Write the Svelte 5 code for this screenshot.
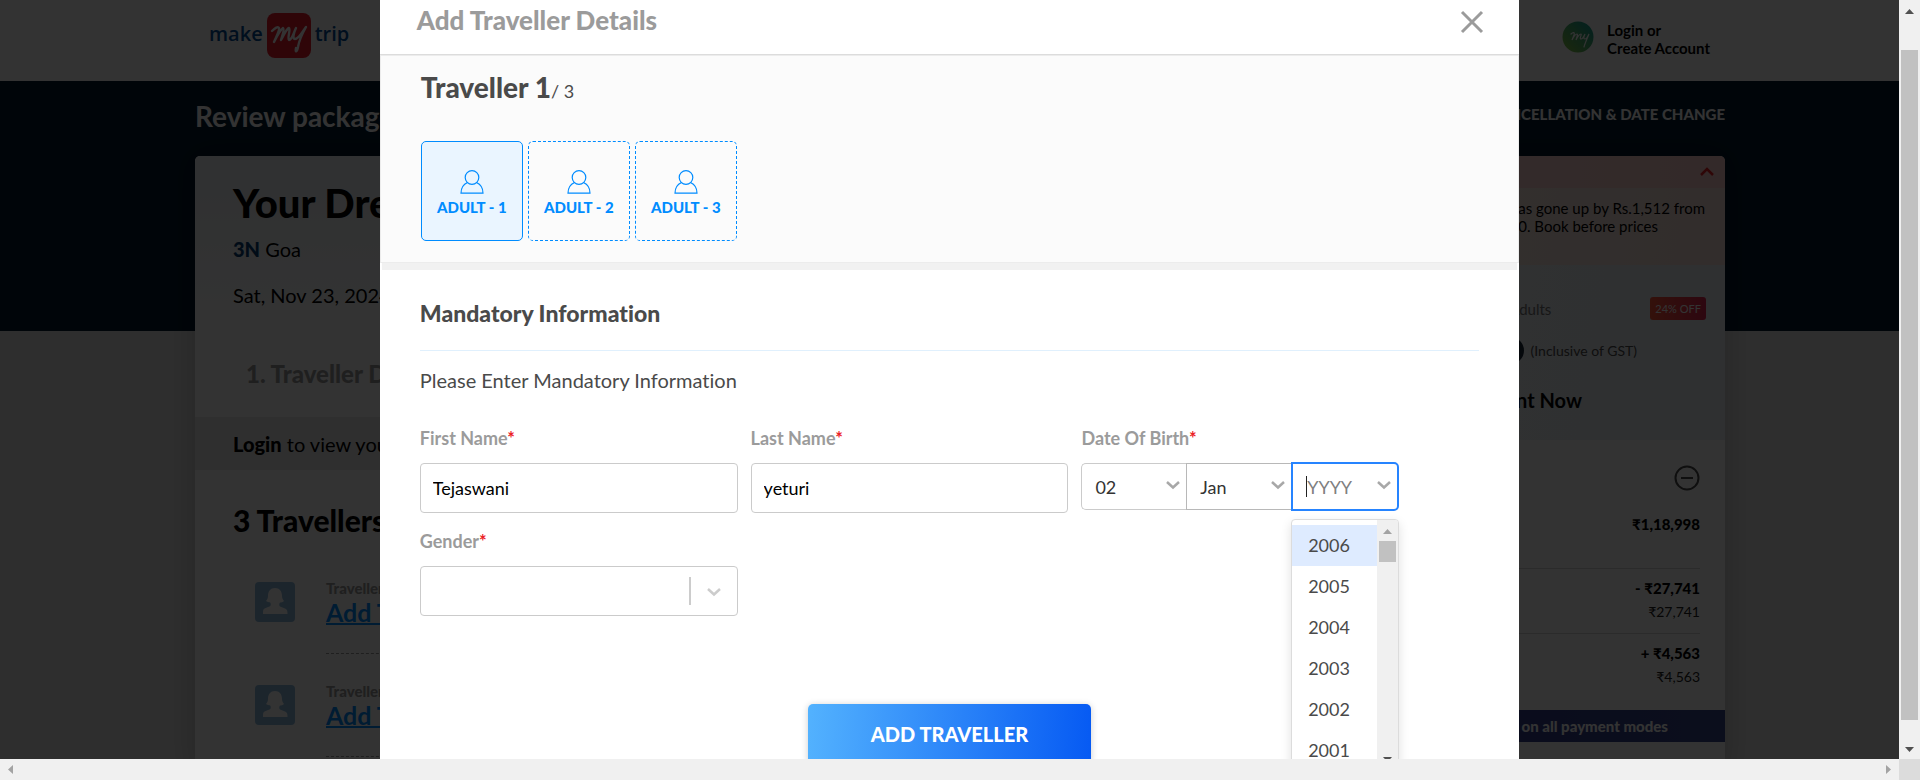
<script>
  const adults = ['ADULT - 1', 'ADULT - 2', 'ADULT - 3'];
  const years = [2006, 2005, 2004, 2003, 2002, 2001];
  let selected = $state(0);
  let firstName = $state('Tejaswani');
  let lastName = $state('yeturi');
</script>

{#snippet chevron()}
  <svg class="chev" viewBox="0 0 16 10" aria-hidden="true"><path d="M2 2l6 5.5L14 2" /></svg>
{/snippet}

<div class="window">
  <div class="viewport">
    <div class="page">
      <header class="top">
        <div class="wrap topbar">
          <a class="logo" href="#home" aria-label="make my trip">
            <span>make</span>
            <svg viewBox="0 0 44 45" aria-hidden="true">
              <rect width="44" height="45" rx="8" fill="#ea1b2c" />
              <g fill="none" stroke="#fff" stroke-width="2.4" stroke-linecap="round" stroke-linejoin="round">
                <path d="M5 18c3-3 6-5 7-3s-3 9-5 14c3-6 6-12 9-14 2 1-1 8-2 12 3-5 5-11 8-12 2 1-2 10 0 12 3 0 5-8 7-12-2 4-4 11-1 11 4 0 7-7 11-12-4 7-7 14-8 20-1 5-3 6-2 1" />
              </g>
            </svg>
            <span>trip</span>
          </a>
          <a class="login" href="#login">
            <svg viewBox="0 0 32 32" aria-hidden="true">
              <defs>
                <linearGradient id="my-grad" x1="0" y1="1" x2="1" y2="0">
                  <stop offset="0" stop-color="#8cc63f" /><stop offset="1" stop-color="#0a9b9b" />
                </linearGradient>
              </defs>
              <circle cx="16" cy="16" r="15.5" fill="url(#my-grad)" />
              <path d="M9 13c2-2 4-2 3 1l-2 5c2-4 4-6 5-6s0 3-1 6c2-4 4-6 5-6s-2 5 0 5 3-3 4-5c-1 2-2 5 0 5s3-3 4-5c-2 5-4 9-5 13" fill="none" stroke="#fff" stroke-width="1.2" stroke-linecap="round" />
            </svg>
            <span>Login or<br />Create Account</span>
          </a>
        </div>
      </header>
      <div class="hero">
        <div class="wrap herobar">
          <h1>Review package</h1>
          <span class="policy">CANCELLATION &amp; DATE CHANGE</span>
        </div>
      </div>
      <main class="wrap columns">
        <section class="card trip">
          <div class="summary">
            <h2>Your Dream</h2>
            <p class="nights"><b>3N</b> Goa</p>
            <p>Sat, Nov 23, 2024</p>
          </div>
          <h3 class="step">1. Traveller Details</h3>
          <p class="loginbar"><b>Login</b>&nbsp;to view your</p>
          <h3 class="count">3 Travellers</h3>
          <ul class="people">
            {#each [1, 2] as n}
              <li>
                <svg viewBox="0 0 40 40" aria-hidden="true">
                  <rect width="40" height="40" rx="4" fill="#8cb9dc" />
                  <path d="M20 6c4.500 0 7 3 7 8 0 2 1 4 2 5-1 1-3 1.500-4 1.500-1 1.500-1 3 0 4l5 2c2 .8 2.500 2 2.500 5.500H8C8 28.500 8 27 10 26.300l5-2c1-1 1-2.500 0-4-1 0-3-.3-4-1.300 1-1 2-3 2-5 0-5 2.500-8 7-8z" fill="#fff" />
                </svg>
                <div>
                  <small>Traveller {n}</small>
                  <a href="#traveller">Add Traveller</a>
                </div>
              </li>
            {/each}
          </ul>
        </section>

        <aside class="card fare">
          <div class="alert">
            <svg viewBox="0 0 16 10" aria-hidden="true"><path d="M2 8l6-6 6 6" /></svg>
          </div>
          <p class="change"><span>has gone up by Rs.1,512 from</span><span class="second">0. Book before prices</span></p>
          <div class="offer">
            <div class="row adults"><span>Adults</span><b class="badge">24% OFF</b></div>
            <div class="row gst"><i></i><span>(Inclusive of GST)</span></div>
            <p class="paynow">Payment Now</p>
          </div>
          <div class="bill">
            <svg class="minus" viewBox="0 0 26 26" aria-hidden="true"><circle cx="13" cy="13" r="11.500" /><path d="M7 13h12" /></svg>
            <p class="total"><b>₹1,18,998</b></p>
            <p class="line"><b>- ₹27,741</b><span>₹27,741</span></p>
            <p class="line"><b>+ ₹4,563</b><span>₹4,563</span></p>
          </div>
          <p class="banner">on all payment modes</p>
        </aside>
      </main>
    </div>

    <div class="overlay">
      <div class="modal" role="dialog" aria-labelledby="dialog-title">
        <header class="modal-head">
          <h2 id="dialog-title">Add Traveller Details</h2>
          <button type="button" class="close" aria-label="Close">
            <svg viewBox="0 0 24 24"><path d="M2 2l20 20M22 2L2 22" /></svg>
          </button>
        </header>
        <section class="picker">
          <h3>Traveller 1<span>/ 3</span></h3>
          <div class="tabs">
            {#each adults as label, i}
              <button type="button" class:active={selected === i} onclick={() => (selected = i)}>
                <svg viewBox="0 0 24 24" aria-hidden="true">
                  <circle cx="12" cy="7.500" r="6.800" />
                  <path d="M7.500 12.500C3.500 14.300 1 18 1 23.200h22c0-5.200-2.500-8.900-6.500-10.700" />
                </svg>
                {label}
              </button>
            {/each}
          </div>
        </section>
        <div class="band"></div>
        <form onsubmit={(e) => e.preventDefault()}>
          <h3>Mandatory Information</h3>
          <p class="hint">Please Enter Mandatory Information</p>
          <div class="fields">
            <div class="field">
              <label for="first">First Name<em>*</em></label>
              <input id="first" class="box" type="text" bind:value={firstName} />
            </div>
            <div class="field">
              <label for="last">Last Name<em>*</em></label>
              <input id="last" class="box" type="text" bind:value={lastName} />
            </div>
            <div class="field">
              <label for="day">Date Of Birth<em>*</em></label>
              <div class="dob">
                <div class="part day">
                  <select id="day"><option>02</option></select>
                  {@render chevron()}
                </div>
                <div class="part month">
                  <select aria-label="Month"><option>Jan</option></select>
                  {@render chevron()}
                </div>
                <div class="part year">
                  <input type="text" placeholder="YYYY" aria-label="Year" role="combobox" aria-expanded="true" aria-controls="years" />
                  <i class="caret"></i>
                  {@render chevron()}
                  <div class="menu">
                    <ul id="years" role="listbox">
                      {#each years as year, i}
                        <li role="option" aria-selected={i === 0} class:focused={i === 0}>{year}</li>
                      {/each}
                    </ul>
                    <div class="track">
                      <svg viewBox="0 0 9 5" fill="#a3a3a3"><path d="M0 5L4.500 0 9 5z" /></svg>
                      <div class="thumb"></div>
                      <svg viewBox="0 0 9 5" fill="#505050"><path d="M0 0l4.500 5L9 0z" /></svg>
                    </div>
                  </div>
                </div>
              </div>
            </div>
            <div class="field">
              <label for="gender">Gender<em>*</em></label>
              <div class="box gender">
                <select id="gender"><option value=""></option></select>
                <i></i>
                {@render chevron()}
              </div>
            </div>
          </div>
          <button class="submit" type="submit">ADD TRAVELLER</button>
        </form>
      </div>
    </div>
  </div>

  <div class="vbar">
    <svg viewBox="0 0 9 5"><path d="M0 5L4.500 0 9 5z" /></svg>
    <div></div>
    <svg viewBox="0 0 9 5"><path d="M0 0l4.500 5L9 0z" /></svg>
  </div>
  <div class="hbar">
    <svg viewBox="0 0 5 9"><path d="M5 0L0 4.500 5 9z" /></svg>
    <svg viewBox="0 0 5 9"><path d="M0 0l5 4.500L0 9z" /></svg>
  </div>
  <div class="corner"></div>
</div>

<style>
  :global(body) { margin: 0; }
  * { box-sizing: border-box; }
  h1, h2, h3, p, ul { margin: 0; padding: 0; }
  li { list-style: none; }
  b, h1, h2, h3 { font-weight: 900; }
  button, input, select { font-family: inherit; }

  .window {
    display: grid;
    grid-template-columns: minmax(0, 1fr) 21px;
    grid-template-rows: minmax(0, 1fr) 21px;
    height: 100vh;
    font-family: Lato, "Open Sans", sans-serif;
    font-variant-ligatures: none;
    color: #000;
  }
  .viewport { position: relative; overflow: hidden; }
  .page { width: 100vw; min-height: 100%; background: #e6e6e6; }
  .wrap { width: 1530px; max-width: 100%; margin: 0 auto; }

  .top { background: #fff; height: 81px; }
  .topbar { display: flex; justify-content: space-between; padding: 13px 15px 0 14px; }
  .logo { display: flex; gap: 4px; font: 600 20px/41px "Open Sans", sans-serif; color: #004a97; text-decoration: none; }
  .logo svg { width: 44px; height: 45px; }
  .login { display: flex; gap: 13px; padding-top: 8px; font-size: 15px; line-height: 18px; font-weight: 700; color: #000; text-decoration: none; }
  .login svg { width: 32px; height: 32px; }

  .hero { height: 250px; background: #001a2e; }
  .herobar { display: flex; justify-content: space-between; padding-top: 17px; color: #fff; }
  h1 { font-size: 28px; line-height: 36px; font-weight: 700; }
  .policy { font-size: 15px; line-height: 32px; font-weight: 900; }

  .columns { display: flex; justify-content: space-between; margin-top: -175px; }
  .card { background: #fff; border-radius: 5px 5px 0 0; box-shadow: 0 0 30px rgba(0, 0, 0, 0.2); overflow: hidden; font-size: 20px; line-height: 24px; }
  .trip { width: 66%; }
  .summary { padding: 23px 38px 24px; background: linear-gradient(#edf2f7, #fff); }
  .summary h2 { font-size: 40px; line-height: 48px; }
  .nights { margin: 10px 0 22px; }
  .nights b { color: #053c76; }
  .step { display: flex; align-items: center; height: 86px; padding-left: 51px; font-size: 24px; color: #9b9b9b; }
  .loginbar { display: flex; align-items: center; height: 53px; padding-left: 38px; background: #ebebeb; }
  .count { padding: 32px 38px 0; font-size: 30px; line-height: 36px; }
  .people { padding: 13px 38px 0 60px; }
  .people li { display: flex; gap: 31px; padding-top: 28px; }
  .people svg { width: 40px; height: 40px; margin-top: 3px; }
  .people div { flex: 1; height: 75px; border-bottom: 1px dashed #9b9b9b; }
  .people small { display: block; font-size: 15px; line-height: 19px; font-weight: 900; color: #9b9b9b; }
  .people a { font-size: 25px; line-height: 28px; font-weight: 700; color: #008cff; text-decoration-thickness: 2px; }

  .fare { width: 410px; font-size: 15px; line-height: 18px; }
  .alert { display: flex; justify-content: flex-end; height: 32px; padding: 11px 10px 0; background: linear-gradient(90deg, #ffd9d6, #ffcdcb); }
  .alert svg { width: 16px; height: 10px; fill: none; stroke: #eb2026; stroke-width: 2.500; }
  .change { height: 77px; padding: 11px 20px 0 0; background: linear-gradient(100deg, #fff1ea, #f8e0da); text-align: right; }
  .change span { display: block; }
  .change .second { padding-right: 47px; }
  .offer { height: 175px; padding-top: 32px; background: linear-gradient(100deg, #f2f5f8, #e8eff5); }
  .row { display: flex; align-items: center; justify-content: flex-end; }
  .adults { gap: 99px; height: 23px; padding-right: 19px; color: #757575; }
  .badge { padding: 0 5px; border-radius: 3px; background: linear-gradient(90deg, #ff5538, #df2450); color: #fff; font-size: 11px; line-height: 23px; font-weight: 400; }
  .gst { gap: 7px; height: 27px; margin-top: 17px; padding-right: 88px; font-size: 14px; color: #4a4a4a; }
  .gst i { width: 60px; height: 27px; border-radius: 14px; background: #1a2a3a; }
  .paynow { padding: 24px 143px 0 0; text-align: right; font-size: 20px; line-height: 24px; font-weight: 700; }
  .bill { padding: 25px 25px 0 0; height: 270px; text-align: right; }
  .minus { display: block; width: 26px; height: 26px; margin-left: auto; fill: none; stroke: #4a4a4a; stroke-width: 2; }
  .total { height: 77px; padding-top: 24px; }
  .line { height: 65px; padding-top: 10px; border-top: 1px solid #d8d8d8; }
  .line b, .line span { display: block; }
  .line span { padding-top: 6px; font-size: 14px; color: #222; }
  .banner { height: 32px; padding-right: 57px; margin-bottom: 30px; text-align: right; line-height: 32px; font-weight: 900; color: #fff; background: linear-gradient(90deg, #2b3390, #39478a); }

  .overlay { position: absolute; inset: 0; display: flex; justify-content: center; background: rgba(0, 0, 0, 0.8); }
  .modal { width: 60%; background: #fff; }
  .modal-head { display: flex; justify-content: space-between; padding: 4px 35px 18px 37px; border-bottom: 1px solid #dcdcdc; }
  .modal-head h2 { font-size: 26px; line-height: 32px; color: #9b9b9b; }
  .close { padding: 0; border: 0; background: none; }
  .close svg { display: block; width: 24px; height: 24px; fill: none; stroke: #9b9b9b; stroke-width: 3; margin-top: 4px; }
  .picker { padding: 14px 40px 21px; border: 1px solid #ececec; background: #fbfbfb; color: #4a4a4a; }
  .picker h3 { font-size: 28px; line-height: 34px; }
  .picker h3 span { font-size: 18px; line-height: 18px; font-weight: 400; }
  .tabs { display: flex; gap: 5px; margin-top: 37px; }
  .tabs button { display: flex; flex-direction: column; align-items: center; width: 102px; height: 100px; padding: 28px 0 0; border: 1px dashed #008cff; border-radius: 5px; background: none; color: #008cff; font-size: 15px; line-height: 18px; font-weight: 900; }
  .tabs .active { border-style: solid; background: #eaf5ff; }
  .tabs svg { width: 24px; height: 24px; margin-bottom: 4px; fill: none; stroke: #008cff; stroke-width: 1.200; }
  .band { height: 7px; margin: 0 2px; background: #f1f1f1; }

  form { padding: 29px 40px 0; color: #4a4a4a; }
  form h3 { padding-bottom: 23px; border-bottom: 1px solid #e0f0fd; font-size: 23px; line-height: 28px; }
  .hint { margin: 17px 0 35px; font-size: 20px; line-height: 24px; }
  .fields { display: grid; grid-template-columns: repeat(3, 30%); gap: 17px 13px; }
  .field label { display: block; margin-bottom: 14px; font-size: 18px; line-height: 22px; font-weight: 700; color: #9b9b9b; }
  em { font-style: normal; color: #eb2026; }
  .box { display: block; width: 100%; height: 50px; padding: 0 12px; border: 1px solid #cbcbcb; border-radius: 4px; background: #fff; font-size: 18px; color: #000; }
  select, .year input { flex: 1; min-width: 0; padding: 0; border: 0; outline: 0; background: none; appearance: none; font-size: 18px; line-height: 24px; color: #333; }
  .chev { flex: none; width: 16px; height: 10px; fill: none; stroke: #a8a8a8; stroke-width: 2.500; }
  .dob { display: grid; grid-template-columns: 33% 33% 34%; height: 47px; }
  .part { position: relative; display: flex; min-width: 0; align-items: center; padding: 0 5px 0 13px; border: 1px solid #b8b8b8; }
  .part .chev { margin-bottom: 4px; }
  .day { border-color: #cbcbcb; border-right: 0; border-radius: 5px 0 0 5px; }
  .month { border-right: 0; }
  .year { margin: -1px 0; padding-left: 14px; border: 2px solid #2684ff; border-radius: 0 5px 5px 0; }
  .year input { width: 100%; }
  .year input::placeholder { color: #808080; opacity: 1; }
  .caret { position: absolute; left: 13px; top: 12px; width: 1px; height: 21px; background: #222; }
  .menu { position: absolute; left: -2px; right: -2px; top: 55px; display: flex; height: 252px; border: 1px solid #dcdcdc; border-radius: 4px; background: #fff; box-shadow: 0 4px 11px rgba(0, 0, 0, 0.12); overflow: hidden; }
  .menu ul { flex: 1; padding-top: 5px; }
  .menu li { padding-left: 16px; font-size: 18px; line-height: 41px; color: #4a4a4a; }
  .menu .focused { background: #deebff; }
  .track { display: flex; flex-direction: column; align-items: center; width: 21px; padding: 9px 0 8px; background: #f0f0f0; }
  .track svg { width: 9px; height: 5px; }
  .thumb { width: 17px; height: 21px; margin: 7px 0 auto; background: #c1c1c1; }
  .gender { display: flex; align-items: center; padding-right: 15px; }
  .gender i { width: 2px; height: 28px; margin-right: 15px; background: #ccc; }
  .gender .chev { stroke: #ccc; margin-top: 2px; }
  .submit { display: block; width: 283px; height: 60px; margin: 88px auto 0; padding: 0; border: 0; border-radius: 5px; background: linear-gradient(93deg, #53b2fe, #065af3); box-shadow: 0 1px 7px rgba(0, 0, 0, 0.2); color: #fff; font-size: 20px; font-weight: 900; }

  .vbar { display: flex; flex-direction: column; align-items: center; padding: 9px 0 7px; background: #f0f0f0; }
  .vbar svg { width: 9px; height: 5px; fill: #505050; }
  .vbar div { flex: 1; width: 17px; margin: 36px 0 27px; background: #c1c1c1; }
  .hbar { display: flex; align-items: center; justify-content: space-between; padding: 0 8px; background: #f0f0f0; }
  .hbar svg { width: 5px; height: 9px; fill: #a3a3a3; }
  .corner { background: #dcdcdc; }
</style>
